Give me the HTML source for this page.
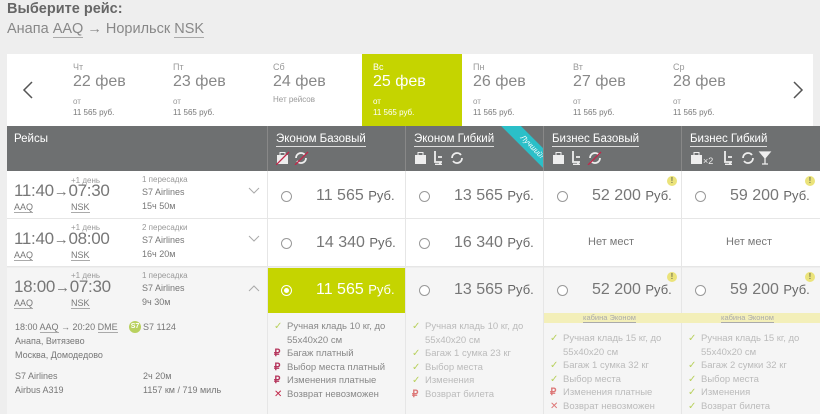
<!DOCTYPE html>
<html><head><meta charset="utf-8"><style>
*{margin:0;padding:0;box-sizing:border-box}
html,body{width:820px;height:414px;overflow:hidden}
body{background:#eeeeee;font-family:"Liberation Sans",Arial,sans-serif;color:#666;position:relative}
.a{position:absolute;white-space:nowrap}
.u{border-bottom:1px solid #aaa}
.day{position:absolute;top:54px;width:100px;height:72px;padding:8px 0 0 11px;color:#999}
.day .w{font-size:9px;line-height:11px}
.day .d{font-size:16px;line-height:18px;color:#888}
.day .o{font-size:8px;line-height:10px;margin-top:6px}
.day .p{font-size:8px;line-height:12px;color:#777}
.hd{position:absolute;top:126px;height:45px;background:#6e7071;border-left:1px solid #888}
.hd .t{position:absolute;left:8px;top:7px;color:#fff;font-size:11.5px;border-bottom:1px solid #ddd;line-height:13px}
.ic{position:absolute;left:8px;top:25px}
.cell{position:absolute;border-left:1px solid #e6e6e6}
.rad{position:absolute;width:11px;height:11px;border:1px solid #999;border-radius:50%;background:#fff}
.pr{position:absolute;font-size:16px;color:#777;right:16px}
.pr b{font-weight:normal;font-size:13px;color:#666}
.ft{position:absolute;font-size:9.5px;line-height:13.5px;color:#999}
.ft div{position:relative;padding-left:19px}
.ft i{position:absolute;left:6px;top:0;font-style:normal;font-size:10px}
.ck{color:#b9d15f}.rb{color:#b5355c;font-weight:bold}.x{color:#c0284a}
.warn{position:absolute;width:10px;height:10px;border-radius:50%;background:#ebe37a;color:#775;font-size:8px;text-align:center;line-height:10px;font-weight:bold}
.tm{font-size:17px;color:#777;letter-spacing:-0.3px}
.tm s{text-decoration:none;font-size:15px}
.sm{font-size:8px;color:#999}
.cd{font-size:9px;color:#777}
</style></head><body>
<div class="a" style="left:7px;top:1px;font-size:14.5px;font-weight:bold;color:#666">Выберите рейс:</div>
<div class="a" style="left:7px;top:21px;font-size:14.5px;color:#888">Анапа <span class="u">AAQ</span> → Норильск <span class="u">NSK</span></div>

<div class="a" style="left:7px;top:54px;width:806px;height:72px;background:#fff"></div>
<svg class="a" style="left:22px;top:81px" width="12" height="18"><path d="M10 1L2 9l8 8" fill="none" stroke="#555" stroke-width="1.5"/></svg>
<svg class="a" style="left:792px;top:81px" width="12" height="18"><path d="M2 1l8 8-8 8" fill="none" stroke="#555" stroke-width="1.5"/></svg>
<div class="day" style="left:62px"><div class="w">Чт</div><div class="d">22 фев</div><div class="o">от</div><div class="p">11 565 руб.</div></div>
<div class="day" style="left:162px"><div class="w">Пт</div><div class="d">23 фев</div><div class="o">от</div><div class="p">11 565 руб.</div></div>
<div class="day" style="left:262px"><div class="w">Сб</div><div class="d">24 фев</div><div class="o" style="margin-top:4px">Нет рейсов</div></div>
<div class="day" style="left:362px;background:#c5d400;color:#fff"><div class="w">Вс</div><div class="d" style="color:#fff">25 фев</div><div class="o">от</div><div class="p" style="color:#fff">11 565 руб.</div></div>
<div class="day" style="left:462px"><div class="w">Пн</div><div class="d">26 фев</div><div class="o">от</div><div class="p">11 565 руб.</div></div>
<div class="day" style="left:562px"><div class="w">Вт</div><div class="d">27 фев</div><div class="o">от</div><div class="p">11 565 руб.</div></div>
<div class="day" style="left:662px"><div class="w">Ср</div><div class="d">28 фев</div><div class="o">от</div><div class="p">11 565 руб.</div></div>

<div class="hd" style="left:7px;width:260px;border:0"><div class="a" style="left:7px;top:7px;color:#fff;font-size:11.5px">Рейсы</div></div>
<div class="hd" style="left:267px;width:138px"><div class="t">Эконом Базовый</div>
<svg class="ic" width="40" height="14"><rect x="1" y="4" width="11" height="9" fill="#eee"/><rect x="4" y="1.5" width="5" height="3" fill="none" stroke="#eee"/><path d="M0 14L13 1" stroke="#c0284a" stroke-width="1.3"/><path d="M20 7a5 5 0 0 1 9-3M30 7a5 5 0 0 1-9 3" fill="none" stroke="#eee" stroke-width="1.8"/><path d="M19 14L32 1" stroke="#c0284a" stroke-width="1.3"/></svg></div>
<div class="hd" style="left:405px;width:138px;overflow:hidden"><div class="t">Эконом Гибкий</div>
<svg class="ic" width="60" height="14"><rect x="1" y="4" width="11" height="9" fill="#eee"/><rect x="4" y="1.5" width="5" height="3" fill="none" stroke="#eee"/><path d="M21 0v11h7M24 6h4M26 11v3M21 13.5h7" fill="none" stroke="#eee" stroke-width="1.8"/><path d="M38 7a5 5 0 0 1 9-3M48 7a5 5 0 0 1-9 3" fill="none" stroke="#eee" stroke-width="1.8"/></svg>
<div class="a" style="left:84px;top:14px;width:84px;height:14px;background:#2bbfc8;transform:rotate(45deg);color:#fff;font-size:7.5px;text-align:center;line-height:14px;font-style:italic">Лучший!</div></div>
<div class="hd" style="left:543px;width:138px"><div class="t">Бизнес Базовый</div>
<svg class="ic" width="60" height="14"><rect x="1" y="4" width="11" height="9" fill="#eee"/><rect x="4" y="1.5" width="5" height="3" fill="none" stroke="#eee"/><path d="M21 0v11h7M24 6h4M26 11v3M21 13.5h7" fill="none" stroke="#eee" stroke-width="1.8"/><path d="M38 7a5 5 0 0 1 9-3M48 7a5 5 0 0 1-9 3" fill="none" stroke="#eee" stroke-width="1.8"/><path d="M36 14L49 1" stroke="#c0284a" stroke-width="1.3"/></svg></div>
<div class="hd" style="left:681px;width:139px"><div class="t">Бизнес Гибкий</div>
<svg class="ic" width="90" height="14"><rect x="1" y="4" width="11" height="9" fill="#eee"/><rect x="4" y="1.5" width="5" height="3" fill="none" stroke="#eee"/><text x="13" y="13" fill="#eee" font-size="9" font-family="Liberation Sans">×2</text><path d="M35 0v11h7M38 6h4M40 11v3M35 13.5h7" fill="none" stroke="#eee" stroke-width="1.8"/><path d="M53 7a5 5 0 0 1 9-3M63 7a5 5 0 0 1-9 3" fill="none" stroke="#eee" stroke-width="1.8"/><path d="M70 1h10l-5 6zM75 7v6M72 13h6" fill="#eee" stroke="#eee" stroke-width="1.3"/></svg></div>

<div class="a" style="left:7px;top:171px;width:813px;height:48px;background:#fff;border-bottom:1px solid #e6e6e6"></div>
<div class="a" style="left:7px;top:219px;width:813px;height:48px;background:#fff;border-bottom:1px solid #e6e6e6"></div>
<div class="a" style="left:7px;top:268px;width:813px;height:146px;background:#f5f5f5"></div>
<div class="cell" style="left:267px;top:171px;height:243px"></div>
<div class="cell" style="left:405px;top:171px;height:243px"></div>
<div class="cell" style="left:543px;top:171px;height:243px"></div>
<div class="cell" style="left:681px;top:171px;height:243px"></div>

<div class="a sm" style="left:71px;top:176px">+1 день</div>
<div class="a tm" style="left:14px;top:181px">11:40<s>→</s>07:30</div>
<div class="a cd" style="left:14px;top:202px"><span class="u">AAQ</span></div>
<div class="a cd" style="left:71px;top:202px"><span class="u">NSK</span></div>
<div class="a sm" style="left:142px;top:175px">1 пересадка</div>
<div class="a cd" style="left:142px;top:187px">S7 Airlines</div>
<div class="a cd" style="left:142px;top:201px">15ч 50м</div>
<svg class="a" style="left:248px;top:187px" width="12" height="8"><path d="M1 1l5 5 5-5" fill="none" stroke="#aaa"/></svg>

<div class="a sm" style="left:71px;top:223px">+1 день</div>
<div class="a tm" style="left:14px;top:229px">11:40<s>→</s>08:00</div>
<div class="a cd" style="left:14px;top:250px"><span class="u">AAQ</span></div>
<div class="a cd" style="left:71px;top:250px"><span class="u">NSK</span></div>
<div class="a sm" style="left:142px;top:223px">2 пересадки</div>
<div class="a cd" style="left:142px;top:235px">S7 Airlines</div>
<div class="a cd" style="left:142px;top:249px">16ч 20м</div>
<svg class="a" style="left:248px;top:235px" width="12" height="8"><path d="M1 1l5 5 5-5" fill="none" stroke="#aaa"/></svg>

<div class="a sm" style="left:71px;top:271px">+1 день</div>
<div class="a tm" style="left:14px;top:277px">18:00<s>→</s>07:30</div>
<div class="a cd" style="left:14px;top:298px"><span class="u">AAQ</span></div>
<div class="a cd" style="left:71px;top:298px"><span class="u">NSK</span></div>
<div class="a sm" style="left:142px;top:271px">1 пересадка</div>
<div class="a cd" style="left:142px;top:283px">S7 Airlines</div>
<div class="a cd" style="left:142px;top:297px">9ч 30м</div>
<svg class="a" style="left:248px;top:284px" width="12" height="8"><path d="M1 7l5-5 5 5" fill="none" stroke="#aaa"/></svg>

<div class="a cd" style="left:15px;top:322px">18:00 <span class="u">AAQ</span> → 20:20 <span class="u">DME</span></div>
<div class="a" style="left:129px;top:321px;width:12px;height:12px;border-radius:50%;background:#b9d15f;color:#fff;font-size:7px;text-align:center;line-height:12px;font-weight:bold">S7</div>
<div class="a cd" style="left:143px;top:322px">S7 1124</div>
<div class="a cd" style="left:15px;top:336px">Анапа, Витязево</div>
<div class="a cd" style="left:15px;top:350px">Москва, Домодедово</div>
<div class="a cd" style="left:15px;top:371px">S7 Airlines</div>
<div class="a cd" style="left:143px;top:371px">2ч 20м</div>
<div class="a cd" style="left:15px;top:385px">Airbus A319</div>
<div class="a cd" style="left:143px;top:385px">1157 км / 719 миль</div>

<div class="rad" style="left:281px;top:191px"></div><div class="a pr" style="left:316px;top:187px">11 565 <b>Руб.</b></div>
<div class="rad" style="left:419px;top:191px"></div><div class="a pr" style="left:454px;top:187px">13 565 <b>Руб.</b></div>
<div class="rad" style="left:557px;top:191px"></div><div class="a pr" style="left:592px;top:187px">52 200 <b>Руб.</b></div>
<div class="rad" style="left:695px;top:191px"></div><div class="a pr" style="left:730px;top:187px">59 200 <b>Руб.</b></div>
<div class="warn" style="left:667px;top:176px">!</div>
<div class="warn" style="left:805px;top:176px">!</div>
<div class="rad" style="left:281px;top:238px"></div><div class="a pr" style="left:316px;top:234px">14 340 <b>Руб.</b></div>
<div class="rad" style="left:419px;top:238px"></div><div class="a pr" style="left:454px;top:234px">16 340 <b>Руб.</b></div>
<div class="a" style="left:588px;top:236px;font-size:11px;color:#777">Нет мест</div>
<div class="a" style="left:726px;top:236px;font-size:11px;color:#777">Нет мест</div>
<div class="a" style="left:268px;top:268px;width:137px;height:45px;background:#c5d400"></div>
<div class="a" style="left:281px;top:285px;width:11px;height:11px;border-radius:50%;border:1px solid #fff;background:#c5d400"><div style="margin:2px;width:5px;height:5px;border-radius:50%;background:#fff"></div></div>
<div class="a pr" style="left:316px;top:281px;color:#fff">11 565 <b style="color:#fff">Руб.</b></div>
<div class="rad" style="left:419px;top:285px"></div><div class="a pr" style="left:454px;top:281px">13 565 <b>Руб.</b></div>
<div class="rad" style="left:557px;top:285px"></div><div class="a pr" style="left:592px;top:281px">52 200 <b>Руб.</b></div>
<div class="rad" style="left:695px;top:285px"></div><div class="a pr" style="left:730px;top:281px">59 200 <b>Руб.</b></div>
<div class="warn" style="left:667px;top:272px">!</div>
<div class="warn" style="left:805px;top:272px">!</div>
<div class="a" style="left:544px;top:313px;width:276px;height:10px;background:#f3efb9"></div>
<div class="a" style="left:583px;top:313px;font-size:7.5px;color:#aaa;line-height:10px"><span class="u">кабина Эконом</span></div>
<div class="a" style="left:721px;top:313px;font-size:7.5px;color:#aaa;line-height:10px"><span class="u">кабина Эконом</span></div>

<div class="ft" style="left:268px;top:320px;color:#888">
<div><i class="ck">✓</i>Ручная кладь 10 кг, до<br>55x40x20 см</div>
<div><i class="rb">₽</i>Багаж платный</div>
<div><i class="rb">₽</i>Выбор места платный</div>
<div><i class="rb">₽</i>Изменения платные</div>
<div><i class="x">✕</i>Возврат невозможен</div></div>
<div class="ft" style="left:406px;top:320px;color:#bbb">
<div><i class="ck">✓</i>Ручная кладь 10 кг, до<br>55x40x20 см</div>
<div><i class="ck">✓</i>Багаж 1 сумка 23 кг</div>
<div><i class="ck">✓</i>Выбор места</div>
<div><i class="ck">✓</i>Изменения</div>
<div><i class="rb" style="color:#d77">₽</i>Возврат билета</div></div>
<div class="ft" style="left:544px;top:332px;color:#bbb">
<div><i class="ck">✓</i>Ручная кладь 15 кг, до<br>55x40x20 см</div>
<div><i class="ck">✓</i>Багаж 1 сумка 32 кг</div>
<div><i class="ck">✓</i>Выбор места</div>
<div><i class="rb" style="color:#d77">₽</i>Изменения платные</div>
<div><i class="x" style="color:#d77">✕</i>Возврат невозможен</div>
<div><i class="x" style="color:#d77">✕</i>Возврат</div></div>
<div class="ft" style="left:682px;top:332px;color:#bbb">
<div><i class="ck">✓</i>Ручная кладь 15 кг, до<br>55x40x20 см</div>
<div><i class="ck">✓</i>Багаж 2 сумки 32 кг</div>
<div><i class="ck">✓</i>Выбор места</div>
<div><i class="ck">✓</i>Изменения</div>
<div><i class="ck">✓</i>Возврат билета</div>
<div><i class="ck">✓</i>Возврат</div></div>
</body></html>
